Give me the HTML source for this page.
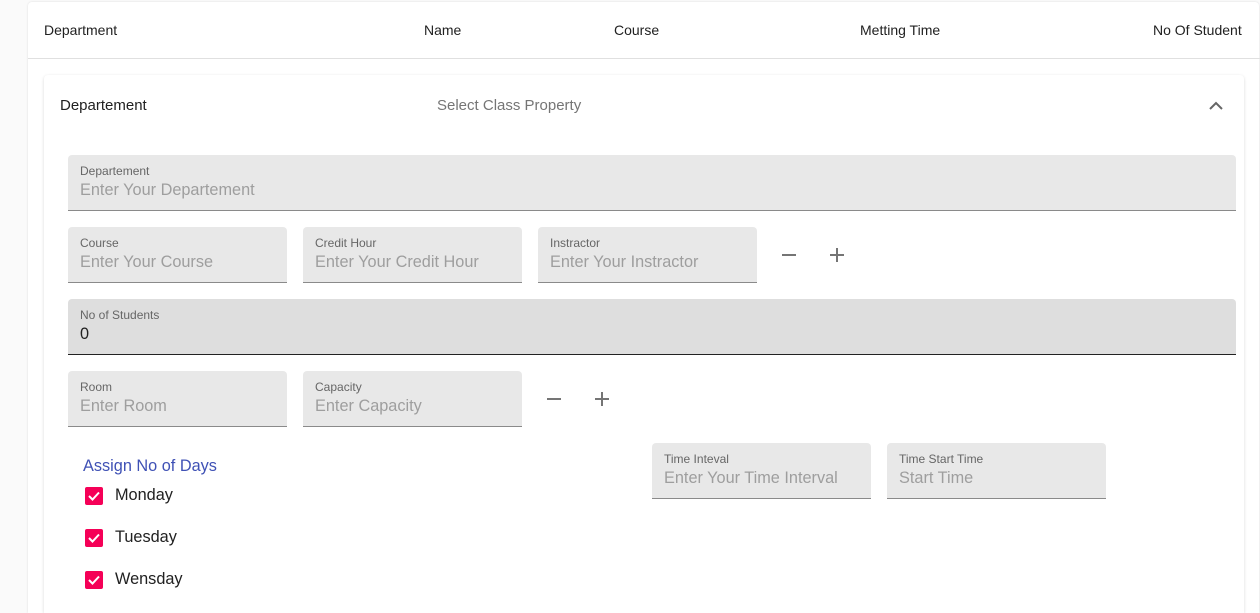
<!DOCTYPE html>
<html style="width:1260px;height:613px;overflow:hidden"><head><meta charset="utf-8"><style>
*{box-sizing:border-box;margin:0;padding:0}
body{width:1260px;height:613px;overflow:hidden;background:#fafafa;font-family:"Liberation Sans",Arial,sans-serif;position:relative}
.abs{position:absolute}
.outer{left:28px;top:2px;width:1231px;height:611px;background:#fff;border-radius:4px 4px 0 0;box-shadow:0 0 2px rgba(0,0,0,.12)}
.hdr{font-size:14px;color:#212121;top:22px}
.line{left:28px;top:58px;width:1232px;height:1px;background:#e0e0e0}
.inner{left:44px;top:75px;width:1200px;height:538px;background:#fff;border-radius:4px 4px 0 0;box-shadow:0 1px 3px rgba(0,0,0,.15)}
.f{background:#e8e8e8;border-radius:4px 4px 0 0;border-bottom:1px solid #8a8a8a;height:56px}
.f .l{position:absolute;left:12px;top:9px;font-size:12px;color:#666}
.f .p{position:absolute;left:12px;top:26px;font-size:16.3px;color:#9e9e9e}
.ic{width:14px;height:2px;background:#757575}
.pl::after{content:"";position:absolute;left:6px;top:-6px;width:2px;height:14px;background:#757575}
.cb{width:18px;height:18px;background:#f50057;border-radius:2px}
.cb svg{position:absolute;left:2px;top:2px}
.day{font-size:16.3px;color:#212121}
</style></head><body>
<div class="abs outer"></div>
<div class="abs hdr" style="left:44px">Department</div>
<div class="abs hdr" style="left:424px">Name</div>
<div class="abs hdr" style="left:614px">Course</div>
<div class="abs hdr" style="left:860px">Metting Time</div>
<div class="abs hdr" style="left:1153px">No Of Student</div>
<div class="abs line"></div>
<div class="abs inner"></div>
<div class="abs" style="left:60px;top:97px;font-size:15px;color:#212121">Departement</div>
<div class="abs" style="left:437px;top:97px;font-size:15px;color:#757575">Select Class Property</div>
<svg class="abs" style="left:1208px;top:100px" width="16" height="12" viewBox="0 0 16 12"><path d="M2 9 L8 3 L14 9" stroke="#666" stroke-width="2" fill="none"/></svg>

<div class="abs f" style="left:68px;top:155px;width:1168px"><span class="l">Departement</span><span class="p">Enter Your Departement</span></div>

<div class="abs f" style="left:68px;top:227px;width:219px"><span class="l">Course</span><span class="p">Enter Your Course</span></div>
<div class="abs f" style="left:303px;top:227px;width:219px"><span class="l">Credit Hour</span><span class="p">Enter Your Credit Hour</span></div>
<div class="abs f" style="left:538px;top:227px;width:219px"><span class="l">Instractor</span><span class="p">Enter Your Instractor</span></div>
<div class="abs ic" style="left:782px;top:254px"></div>
<div class="abs ic pl" style="left:830px;top:254px"></div>

<div class="abs f" style="left:68px;top:299px;width:1168px;background:#dedede;border-bottom:1px solid #222"><span class="l">No of Students</span><span class="p" style="color:#212121">0</span></div>

<div class="abs f" style="left:68px;top:371px;width:219px"><span class="l">Room</span><span class="p">Enter Room</span></div>
<div class="abs f" style="left:303px;top:371px;width:219px"><span class="l">Capacity</span><span class="p">Enter Capacity</span></div>
<div class="abs ic" style="left:547px;top:398px"></div>
<div class="abs ic pl" style="left:595px;top:398px"></div>

<div class="abs" style="left:83px;top:457px;font-size:16.3px;color:#3f51b5">Assign No of Days</div>
<div class="abs cb" style="left:85px;top:487px"><svg width="14" height="14" viewBox="0 0 14 14"><path d="M2 7 L5.5 10.5 L12 3.5" stroke="#fff" stroke-width="2" fill="none"/></svg></div>
<div class="abs day" style="left:115px;top:486px">Monday</div>
<div class="abs cb" style="left:85px;top:529px"><svg width="14" height="14" viewBox="0 0 14 14"><path d="M2 7 L5.5 10.5 L12 3.5" stroke="#fff" stroke-width="2" fill="none"/></svg></div>
<div class="abs day" style="left:115px;top:528px">Tuesday</div>
<div class="abs cb" style="left:85px;top:571px"><svg width="14" height="14" viewBox="0 0 14 14"><path d="M2 7 L5.5 10.5 L12 3.5" stroke="#fff" stroke-width="2" fill="none"/></svg></div>
<div class="abs day" style="left:115px;top:570px">Wensday</div>

<div class="abs f" style="left:652px;top:443px;width:219px"><span class="l">Time Inteval</span><span class="p">Enter Your Time Interval</span></div>
<div class="abs f" style="left:887px;top:443px;width:219px"><span class="l">Time Start Time</span><span class="p">Start Time</span></div>
</body></html>
